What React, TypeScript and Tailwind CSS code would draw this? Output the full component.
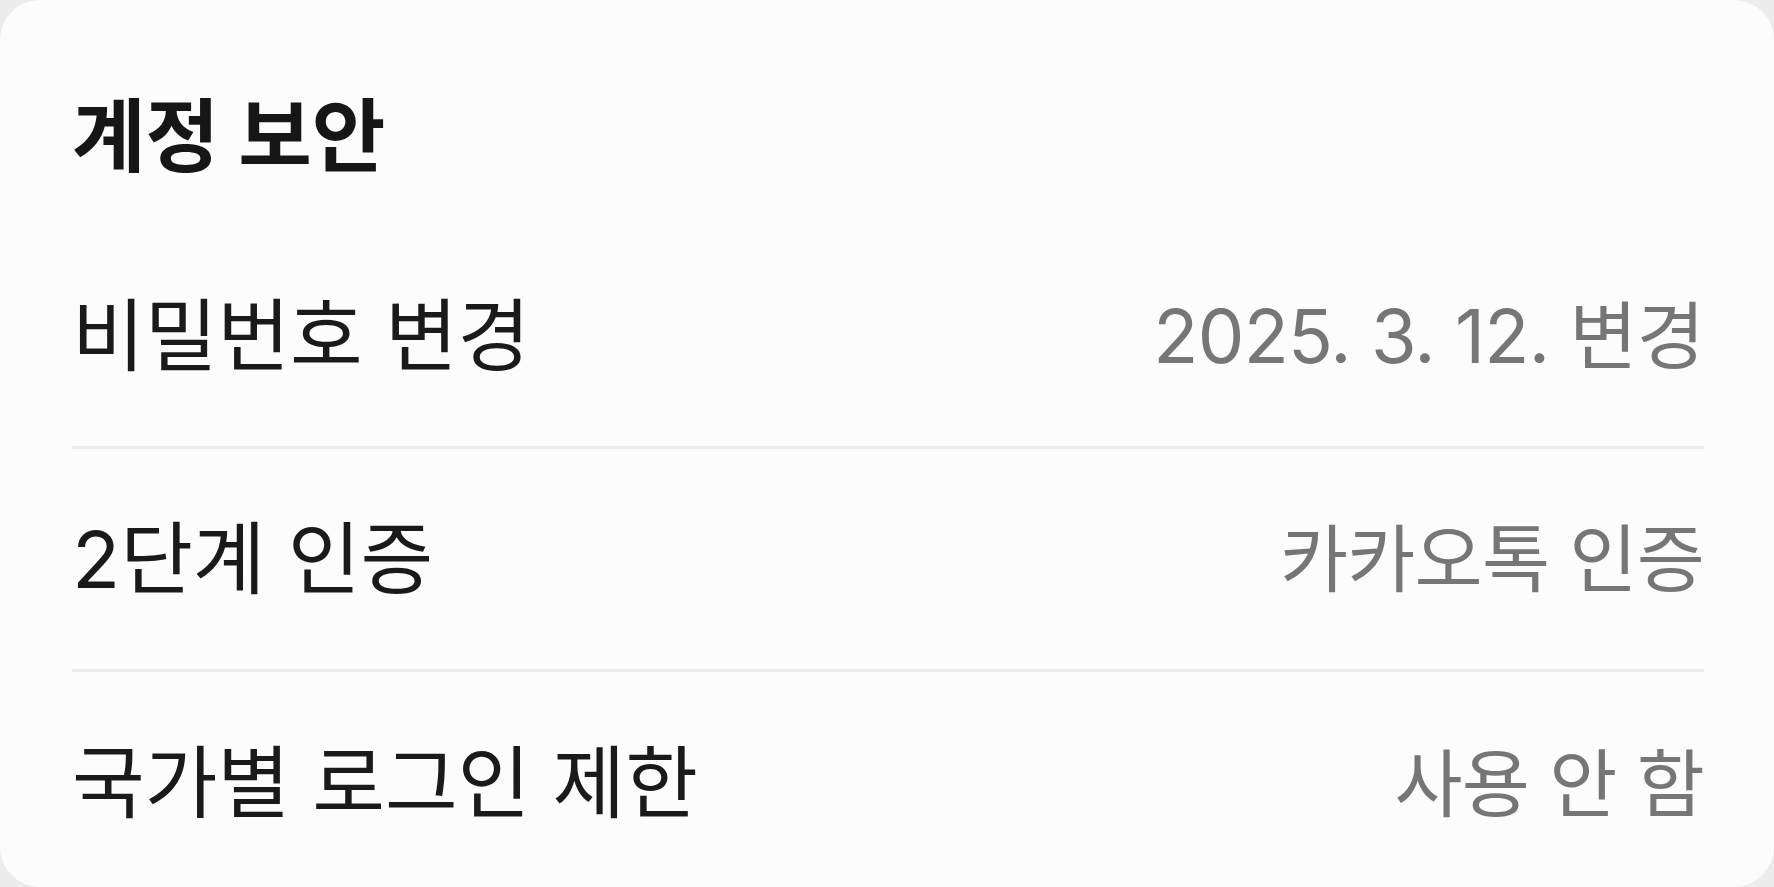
const rows = [
  { label: "비밀번호 변경", value: "2025. 3. 12. 변경" },
  { label: "2단계 인증", value: "카카오톡 인증" },
  { label: "국가별 로그인 제한", value: "사용 안 함" },
];

export default function App() {
  return (
    <div
      className="h-[887px] w-full overflow-hidden bg-[#ececec]"
      style={{ fontFamily: '"Inter", "Noto Sans CJK KR", sans-serif' }}
    >
      <div className="h-full rounded-[40px] bg-[#fcfcfc] pl-[72px] pr-[70px]">
        <div className="h-[226px] pt-[94px]">
          <h1 className="text-[80px] font-bold leading-[84px] text-[#161616]">계정 보안</h1>
        </div>

        {rows.map((row, i) => (
          <div
            key={row.label}
            className={`flex h-[223px] items-center justify-between ${
              i < rows.length - 1 ? "border-b-[3px] border-[#ececec]" : ""
            }`}
          >
            <span className="text-[79px] leading-none text-[#1a1a1a]">{row.label}</span>
            <span className="text-[74px] leading-none tracking-[-0.01em] text-[#767676]">
              {row.value}
            </span>
          </div>
        ))}
      </div>
    </div>
  );
}
